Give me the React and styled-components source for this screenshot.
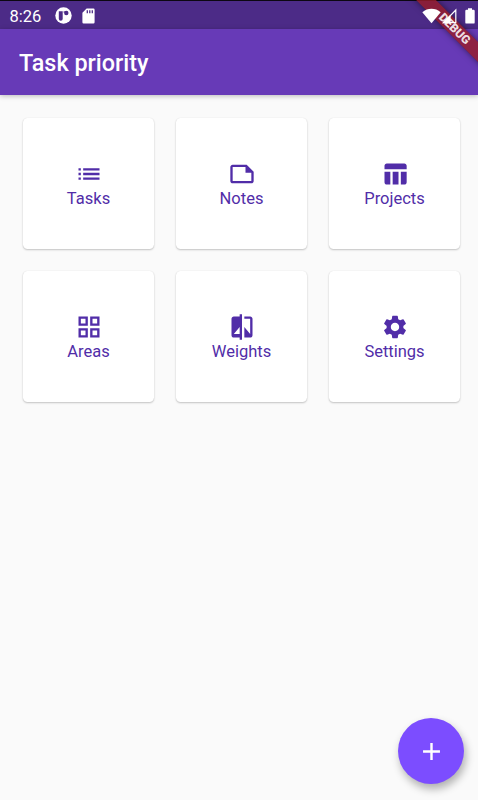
import React from "react";
import styled, { createGlobalStyle } from "styled-components";
import { MdList, MdTableChart, MdGridView, MdCompare, MdSettings, MdAdd } from "react-icons/md";

const GlobalStyle = createGlobalStyle`
* {
  box-sizing: border-box;
}

body {
  margin: 0;
  background: #fafafa;
  font-family: Roboto, sans-serif;
}
`

const Screen = styled.div`
position: relative;
height: 800px;
overflow: hidden;
background: #fafafa;
`

const StatusBar = styled.div`
display: flex;
align-items: center;
height: 29px;
padding: 1px 3.5px 0 9.5px;
border-top: 1px solid #0c0712;
background: #4c2b87;
color: #fff;
`

const Clock = styled.span`
width: 45px;
padding-top: 2px;
font-size: 16.5px;
line-height: 28px;
`

const StatusIcons = styled.div`
display: flex;
align-items: center;
gap: 10px;
`

// sits above the debug ribbon
const SystemIcons = styled.div`
position: relative;
z-index: 3;
display: flex;
align-items: center;
margin-left: auto;

& svg:last-child {
  margin-left: 7.5px;
}
`

const AppBar = styled.header`
position: relative;
display: flex;
align-items: center;
height: 66px;
padding: 2px 19px 0;
background: #673ab7;
box-shadow: 0 1px 5px rgba(0, 0, 0, .26);
`

const Title = styled.h1`
margin: 0;
color: #fff;
font-size: 23.4px;
font-weight: 500;
line-height: 28px;
`

const Ribbon = styled.div`
position: absolute;
z-index: 2;
top: 19.5px;
left: 393px;
width: 120px;
height: 14px;
padding-left: 5px;
background: rgba(151, 28, 42, .82);
box-shadow: 0 0 6px rgba(0, 0, 0, .5);
color: rgba(255, 255, 255, .87);
font-size: 12px;
font-weight: 900;
line-height: 14px;
text-align: center;
transform: rotate(45deg);
`

const CardGrid = styled.main`
display: grid;
grid-template-columns: repeat(3, 131px);
grid-auto-rows: 131px;
gap: 22px;
padding: 23px 0 0 23px;
`

const Card = styled.div`
display: flex;
flex-direction: column;
align-items: center;
justify-content: center;
padding-top: 2px;
border-radius: 4.5px;
background: #fff;
color: #512da8;
box-shadow: 0 1px 2px rgba(0, 0, 0, .22), 0 0 1px rgba(0, 0, 0, .1);

& svg {
  width: 28px;
  height: 28px;
}
`

const CardLabel = styled.span`
padding-top: 1px;
font-size: 16.5px;
line-height: 20px;
`

const AddButton = styled.button`
position: absolute;
top: 718px;
left: 398.4px;
display: flex;
align-items: center;
justify-content: center;
width: 66px;
height: 66px;
padding: 0;
border: 0;
border-radius: 50%;
background: #7c4dff;
color: #fff;
box-shadow: 2px 5px 9px rgba(0, 0, 0, .3);

& svg {
  width: 29px;
  height: 29px;
}
`

const NoteIcon = () => (
  <svg viewBox="0 0 24 24" fill="currentColor">
    <path d="M16 4H4c-1.1 0-2 .9-2 2v12c0 1.1.9 2 2 2h16c1.1 0 2-.9 2-2v-8l-6-6zM4 18V6h11v5h5v7H4z" />
  </svg>
)

const AppIcon = () => (
  <svg width="17" height="17" viewBox="0 0 17 17">
    <circle cx="8.5" cy="8.5" r="8.2" fill="#fff" />
    <path d="M3.8 4.3H7.7v7.4a1.95 1.95 0 0 1-3.9 0z" fill="#4c2b87" />
    <circle cx="11.3" cy="6" r="2.2" fill="#4c2b87" />
    <path d="M8.5 5h2" stroke="#4c2b87" strokeWidth="1" />
  </svg>
)

const CardIcon = () => (
  <svg width="13" height="16" viewBox="0 0 13 16">
    <path d="M4.6.5h6.8a1.2 1.2 0 0 1 1.2 1.2v12.6a1.2 1.2 0 0 1-1.2 1.2H1.6A1.2 1.2 0 0 1 .4 14.3V4.8z" fill="#fff" />
    <path d="M5.3 2.3v3M7.8 2.3v3M10.3 2.3v3" stroke="#4c2b87" strokeWidth="1.3" />
  </svg>
)

const WifiIcon = () => (
  <svg width="19" height="16" viewBox="0 0 19 16">
    <path d="M.3 4.3C5.6-.3 13.4-.3 18.7 4.3L9.5 15.3z" fill="#fff" />
  </svg>
)

// partial signal: left part solid, the rest outlined
const SignalIcon = () => (
  <svg width="16" height="16" viewBox="0 0 16 16">
    <path d="M14.8 2v12.7H2.5z" fill="none" stroke="#fff" strokeWidth="1.2" />
    <path d="M9.6 6.4v8.9H1.2z" fill="#fff" />
  </svg>
)

const BatteryIcon = () => (
  <svg width="10" height="16" viewBox="0 0 10 16">
    <path d="M3 .3h4v1.5h1.5A1.2 1.2 0 0 1 9.7 3v11.4a1.2 1.2 0 0 1-1.2 1.2h-7a1.2 1.2 0 0 1-1.2-1.2V3a1.2 1.2 0 0 1 1.2-1.2H3z" fill="#fff" />
  </svg>
)

const items = [
  { label: "Tasks", Icon: MdList },
  { label: "Notes", Icon: NoteIcon },
  { label: "Projects", Icon: MdTableChart },
  { label: "Areas", Icon: MdGridView },
  { label: "Weights", Icon: MdCompare },
  { label: "Settings", Icon: MdSettings },
]

const App = () => {
  return (
    <>
      <GlobalStyle />
      <Screen>
        <StatusBar>
          <Clock>8:26</Clock>
          <StatusIcons>
            <AppIcon />
            <CardIcon />
          </StatusIcons>
          <SystemIcons>
            <WifiIcon />
            <SignalIcon />
            <BatteryIcon />
          </SystemIcons>
        </StatusBar>
        <AppBar>
          <Title>Task priority</Title>
        </AppBar>
        <Ribbon>DEBUG</Ribbon>

        <CardGrid>
          {items.map(({ label, Icon }) => (
            <Card key={label}>
              <Icon />
              <CardLabel>{label}</CardLabel>
            </Card>
          ))}
        </CardGrid>

        <AddButton aria-label="Add">
          <MdAdd />
        </AddButton>
      </Screen>
    </>
  )
}

export default App
